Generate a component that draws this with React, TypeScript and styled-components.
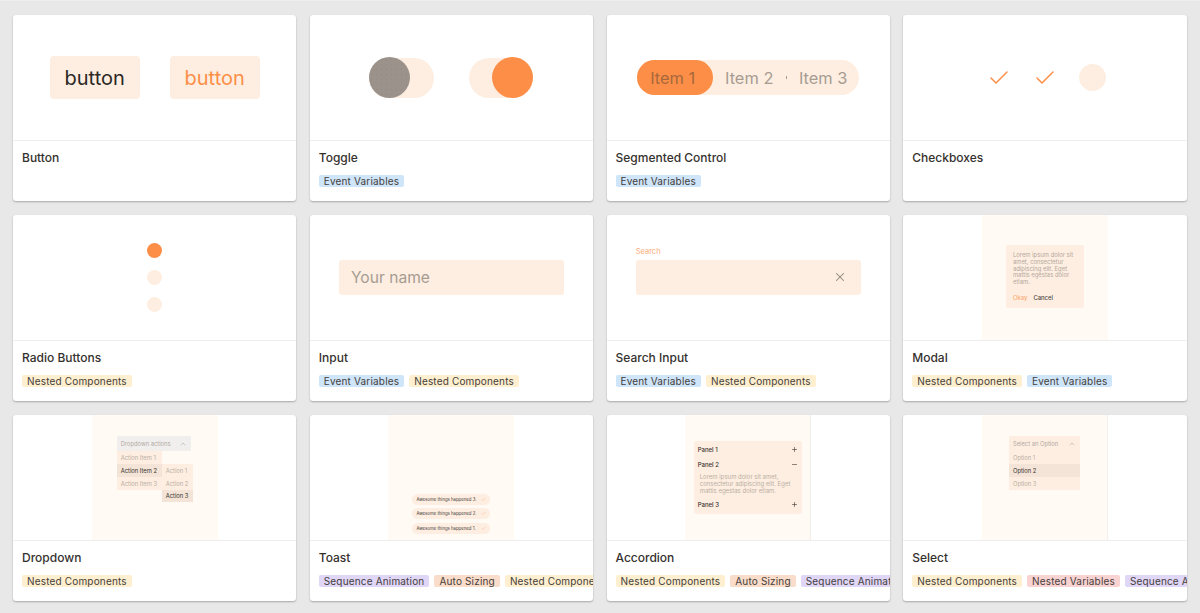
import React from 'react';
import styled, { createGlobalStyle } from 'styled-components';
import { Check, ChevronUp, Minus, Plus, X } from 'lucide-react';

const GlobalStyle = createGlobalStyle`
  html, body {
    margin: 0;
    height: 100%;
    overflow: hidden;
    background: #e8e8e8;
    font-family: Inter, "Liberation Sans", sans-serif;
    color: #33302c;
    -webkit-font-smoothing: antialiased;
  }
  * { box-sizing: border-box; }
`;

const PEACH = '#feeee1';
const ORANGE = '#fd8e47';
const CREAM = '#fffaf4';
const MUTED = '#a69c92';

const Page = styled.div`
  display: grid;
  grid-template-columns: repeat(4, 1fr);
  grid-auto-rows: 185.6px;
  gap: 14.4px 13.33px;
  padding: 14px 13.33px 0 13px;
  height: 613px;
  border-top: 1px solid #efefef;
`;

const Card = styled.div`
  display: flex;
  flex-direction: column;
  min-width: 0;
  background: #fff;
  border-radius: 3px;
  overflow: hidden;
  box-shadow: 0 1px 2px rgba(0, 0, 0, 0.28);
`;

const Preview = styled.div`
  flex: 0 0 126px;
  display: flex;
  align-items: center;
  justify-content: center;
  border-bottom: 1px solid #eeeeee;
`;

const Footer = styled.div`
  flex: 1;
  padding: 9px 0 0 9px;
  min-width: 0;
`;

const Title = styled.div`
  font-size: 12px;
  font-weight: 450;
  line-height: 15px;
  color: #35312e;
`;

const Chips = styled.div`
  display: flex;
  gap: 5px;
  margin-top: 10px;
  overflow: hidden;
  white-space: nowrap;
`;

const chipColors = {
  event: '#cfe5fa',
  nested: '#fdefcf',
  auto: '#f9dcc9',
  sequence: '#e0d6f7',
  variables: '#f9d2d2',
};

type ChipKind = keyof typeof chipColors;

const Chip = styled.span<{ $kind: ChipKind }>`
  flex: none;
  height: 12px;
  padding: 0 5px;
  border-radius: 2px;
  font-size: 10px;
  line-height: 12px;
  letter-spacing: 0.17px;
  color: #45403b;
  background: ${(p) => chipColors[p.$kind]};
`;

const Row = styled.div<{ $gap: number }>`
  display: flex;
  align-items: center;
  gap: ${(p) => p.$gap}px;
`;

const CheckRow = styled(Row)`
  padding-left: 3px;
`;

const DemoButton = styled.div<{ $active?: boolean }>`
  width: 90px;
  height: 43px;
  display: flex;
  align-items: center;
  justify-content: center;
  border-radius: 4px;
  background: ${PEACH};
  font-size: 20px;
  color: ${(p) => (p.$active ? ORANGE : '#2b2825')};
`;

const ToggleTrack = styled.div<{ $on?: boolean }>`
  width: 64.5px;
  height: 40px;
  display: flex;
  align-items: center;
  justify-content: ${(p) => (p.$on ? 'flex-end' : 'flex-start')};
  border-radius: 20px;
  background: ${PEACH};
`;

const ToggleKnob = styled.div<{ $on?: boolean }>`
  width: 41px;
  height: 41px;
  border-radius: 50%;
  background: ${(p) =>
    p.$on ? ORANGE : 'radial-gradient(#938a83 0.4px, transparent 0.6px) 0 0 / 5px 5px, #9b928b'};
`;

const Segmented = styled.div`
  width: 222px;
  height: 35px;
  display: flex;
  align-items: center;
  border-radius: 18px;
  background: ${PEACH};
`;

const Segment = styled.div<{ $active?: boolean }>`
  flex: 0 0 ${(p) => (p.$active ? 76 : 73)}px;
  height: 35px;
  display: flex;
  align-items: center;
  justify-content: center;
  padding-right: ${(p) => (p.$active ? 5 : 1)}px;
  border-radius: 18px;
  font-size: 16.4px;
  color: ${(p) => (p.$active ? '#a8683c' : MUTED)};
  background: ${(p) => (p.$active ? ORANGE : 'transparent')};
`;

const SegmentTick = styled.div`
  flex: none;
  width: 1px;
  height: 3px;
  background: ${MUTED};
`;

const Dot = styled.div<{ $size: number; $active?: boolean }>`
  width: ${(p) => p.$size}px;
  height: ${(p) => p.$size}px;
  border-radius: 50%;
  background: ${(p) => (p.$active ? ORANGE : PEACH)};
`;

const Radios = styled.div`
  display: flex;
  flex-direction: column;
  gap: 12px;
`;

const InputBox = styled.div`
  width: 225px;
  height: 35px;
  display: flex;
  align-items: center;
  justify-content: space-between;
  padding: 0 14px 0 12px;
  border-radius: 3px;
  background: ${PEACH};
  font-size: 15.6px;
  color: ${MUTED};
`;

const SearchLabel = styled.div`
  font-size: 7.5px;
  line-height: 9px;
  color: #fdab76;
  margin-bottom: 4px;
`;

const SearchWrap = styled.div`
  padding-bottom: 13px;
`;

const Frame = styled.div<{ $align?: string; $line?: boolean }>`
  width: 126px;
  height: 100%;
  display: flex;
  flex-direction: column;
  align-items: center;
  justify-content: ${(p) => p.$align ?? 'flex-start'};
  background: ${CREAM};
  border-right: ${(p) => (p.$line ? '1px solid #f1efec' : 'none')};
`;

const ModalBox = styled.div`
  width: 78px;
  margin-top: -2px;
  padding: 7.5px 7px 6.5px;
  border-radius: 2px;
  background: ${PEACH};
  font-size: 5.9px;
  line-height: 6.8px;
  color: #b3a89e;
`;

const ModalActions = styled.div`
  display: flex;
  gap: 6px;
  margin-top: 9px;
  font-weight: 500;
`;

const ActionText = styled.span<{ $orange?: boolean }>`
  color: ${(p) => (p.$orange ? '#fdab76' : '#4a4541')};
`;

const Menu = styled.div`
  margin-top: 21px;
  width: max-content;
  font-size: 5.8px;
  white-space: nowrap;
`;

const MenuHeader = styled.div<{ $width: number; $grey?: boolean }>`
  width: ${(p) => p.$width}px;
  height: 15.5px;
  display: flex;
  align-items: center;
  justify-content: space-between;
  padding: 0 4px;
  border-radius: 1px;
  color: #b1aaa4;
  background: ${(p) => (p.$grey ? '#f1efed' : PEACH)};
`;

const MenuColumns = styled.div`
  display: flex;
  align-items: flex-start;
`;

const MenuList = styled.div<{ $top?: number; $width: number }>`
  width: ${(p) => p.$width}px;
  margin-top: ${(p) => p.$top ?? 0}px;
  background: ${PEACH};
`;

const MenuItem = styled.div<{ $selected?: boolean }>`
  height: 12.7px;
  display: flex;
  align-items: center;
  padding: 0 4px;
  color: ${(p) => (p.$selected ? '#35312d' : '#b9aea4')};
  background: ${(p) => (p.$selected ? '#f4e4d7' : 'transparent')};
`;

const ToastStack = styled.div`
  display: flex;
  flex-direction: column;
  gap: 3.5px;
  padding-bottom: 6px;
`;

const Toast = styled.div`
  width: 78px;
  height: 11px;
  display: flex;
  align-items: center;
  justify-content: space-between;
  padding: 0 4px;
  border-radius: 6px;
  background: ${PEACH};
  font-size: 4.3px;
  white-space: nowrap;
  color: #3c3834;
`;

const Accordion = styled.div`
  width: 108px;
  padding: 1px 0;
  border-radius: 2px;
  background: ${PEACH};
  font-size: 6px;
`;

const PanelRow = styled.div`
  height: 14px;
  margin-bottom: 1.5px;
  display: flex;
  align-items: center;
  justify-content: space-between;
  padding: 0 4px;
  font-weight: 500;
  color: #35312d;
`;

const PanelText = styled.div`
  padding: 1px 4px 2px 6px;
  line-height: 6.9px;
  color: #b9aea4;
`;

const demoText = 'Lorem ipsum dolor sit amet, consectetur adipiscing elit. Eget mattis egestas dolor etiam.';

const Tick = () => <Check size={24} strokeWidth={1.5} color={ORANGE} />;
const TinyTick = () => <Check size={5} strokeWidth={2} color="#fdab76" />;
const Chevron = () => <ChevronUp size={8} strokeWidth={1.5} color="#a69c92" />;
const PanelPlus = () => <Plus size={7} strokeWidth={2} />;
const PanelMinus = () => <Minus size={7} strokeWidth={2} />;

const dropdown = (
  <Frame>
    <Menu>
      <MenuHeader $width={74} $grey>
        Dropdown actions <Chevron />
      </MenuHeader>
      <MenuColumns>
        <MenuList $width={45}>
          <MenuItem>Action Item 1</MenuItem>
          <MenuItem $selected>Action Item 2</MenuItem>
          <MenuItem>Action Item 3</MenuItem>
        </MenuList>
        <MenuList $width={31} $top={12.7}>
          <MenuItem>Action 1</MenuItem>
          <MenuItem>Action 2</MenuItem>
          <MenuItem $selected>Action 3</MenuItem>
        </MenuList>
      </MenuColumns>
    </Menu>
  </Frame>
);

const select = (
  <Frame $line>
    <Menu>
      <MenuHeader $width={71}>
        Select an Option <Chevron />
      </MenuHeader>
      <MenuList $width={71}>
        <MenuItem>Option 1</MenuItem>
        <MenuItem $selected>Option 2</MenuItem>
        <MenuItem>Option 3</MenuItem>
      </MenuList>
    </Menu>
  </Frame>
);

const cards: { title: string; chips: [ChipKind, string][]; demo: React.ReactNode }[] = [
  {
    title: 'Button',
    chips: [],
    demo: (
      <Row $gap={30}>
        <DemoButton>button</DemoButton>
        <DemoButton $active>button</DemoButton>
      </Row>
    ),
  },
  {
    title: 'Toggle',
    chips: [['event', 'Event Variables']],
    demo: (
      <Row $gap={35}>
        <ToggleTrack>
          <ToggleKnob />
        </ToggleTrack>
        <ToggleTrack $on>
          <ToggleKnob $on />
        </ToggleTrack>
      </Row>
    ),
  },
  {
    title: 'Segmented Control',
    chips: [['event', 'Event Variables']],
    demo: (
      <Segmented>
        <Segment $active>Item 1</Segment>
        <Segment>Item 2</Segment>
        <SegmentTick />
        <Segment>Item 3</Segment>
      </Segmented>
    ),
  },
  {
    title: 'Checkboxes',
    chips: [],
    demo: (
      <CheckRow $gap={22}>
        <Tick />
        <Tick />
        <Dot $size={27} />
      </CheckRow>
    ),
  },
  {
    title: 'Radio Buttons',
    chips: [['nested', 'Nested Components']],
    demo: (
      <Radios>
        <Dot $size={15} $active />
        <Dot $size={15} />
        <Dot $size={15} />
      </Radios>
    ),
  },
  {
    title: 'Input',
    chips: [
      ['event', 'Event Variables'],
      ['nested', 'Nested Components'],
    ],
    demo: <InputBox>Your name</InputBox>,
  },
  {
    title: 'Search Input',
    chips: [
      ['event', 'Event Variables'],
      ['nested', 'Nested Components'],
    ],
    demo: (
      <SearchWrap>
        <SearchLabel>Search</SearchLabel>
        <InputBox>
          <span />
          <X size={14} strokeWidth={1.8} color="#8d857d" />
        </InputBox>
      </SearchWrap>
    ),
  },
  {
    title: 'Modal',
    chips: [
      ['nested', 'Nested Components'],
      ['event', 'Event Variables'],
    ],
    demo: (
      <Frame $align="center">
        <ModalBox>
          {demoText}
          <ModalActions>
            <ActionText $orange>Okay</ActionText>
            <ActionText>Cancel</ActionText>
          </ModalActions>
        </ModalBox>
      </Frame>
    ),
  },
  {
    title: 'Dropdown',
    chips: [['nested', 'Nested Components']],
    demo: dropdown,
  },
  {
    title: 'Toast',
    chips: [
      ['sequence', 'Sequence Animation'],
      ['auto', 'Auto Sizing'],
      ['nested', 'Nested Components'],
    ],
    demo: (
      <Frame $align="flex-end">
        <ToastStack>
          {[3, 2, 1].map((n) => (
            <Toast key={n}>
              Awesome things happened {n}.
              <TinyTick />
            </Toast>
          ))}
        </ToastStack>
      </Frame>
    ),
  },
  {
    title: 'Accordion',
    chips: [
      ['nested', 'Nested Components'],
      ['auto', 'Auto Sizing'],
      ['sequence', 'Sequence Animation'],
    ],
    demo: (
      <Frame $align="center" $line>
        <Accordion>
          <PanelRow>
            Panel 1 <PanelPlus />
          </PanelRow>
          <PanelRow>
            Panel 2 <PanelMinus />
          </PanelRow>
          <PanelText>{demoText}</PanelText>
          <PanelRow>
            Panel 3 <PanelPlus />
          </PanelRow>
        </Accordion>
      </Frame>
    ),
  },
  {
    title: 'Select',
    chips: [
      ['nested', 'Nested Components'],
      ['variables', 'Nested Variables'],
      ['sequence', 'Sequence Animation'],
    ],
    demo: select,
  },
];

export default function App() {
  return (
    <>
      <GlobalStyle />
      <Page>
        {cards.map((card) => (
          <Card key={card.title}>
            <Preview>{card.demo}</Preview>
            <Footer>
              <Title>{card.title}</Title>
              <Chips>
                {card.chips.map(([kind, label]) => (
                  <Chip key={label} $kind={kind}>
                    {label}
                  </Chip>
                ))}
              </Chips>
            </Footer>
          </Card>
        ))}
      </Page>
    </>
  );
}
